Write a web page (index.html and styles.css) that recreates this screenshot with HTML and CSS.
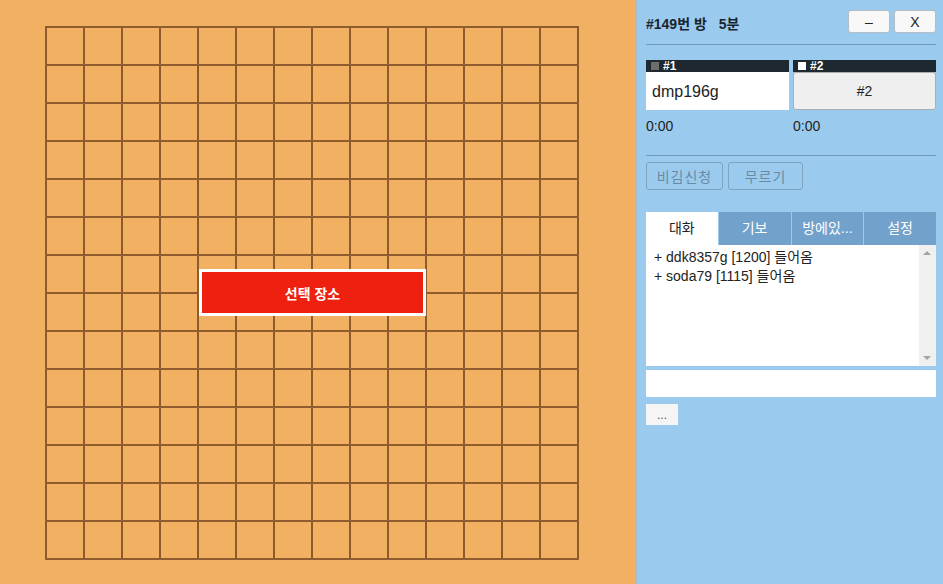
FILE: index.html
```html
<!DOCTYPE html>
<html lang="ko">
<head>
    <meta charset="UTF-8">
    <meta name="viewport" content="width=device-width, initial-scale=1.0">
    <title>#149번 방</title>
    <link rel="stylesheet" href="styles.css">
</head>
<body>
    <div class="game">
        <div class="board-area">
            <div class="board"></div>
            <button class="place-btn">선택 장소</button>
        </div>

        <div class="side">
            <div class="room-head">
                <div class="room-title">#149번 방 <span class="room-time">5분</span></div>
                <div class="win-btns">
                    <button class="win-btn">–</button>
                    <button class="win-btn">X</button>
                </div>
            </div>
            <hr class="line">

            <div class="players">
                <div class="player">
                    <div class="player-label"><span class="stone black"></span>#1</div>
                    <div class="player-name">dmp196g</div>
                    <div class="player-time">0:00</div>
                </div>
                <div class="player">
                    <div class="player-label"><span class="stone white"></span>#2</div>
                    <button class="player-seat">#2</button>
                    <div class="player-time">0:00</div>
                </div>
            </div>
            <hr class="line">

            <div class="actions">
                <button class="act-btn draw" disabled>비김신청</button>
                <button class="act-btn undo" disabled>무르기</button>
            </div>

            <div class="tabs">
                <div class="tab active">대화</div>
                <div class="tab">기보</div>
                <div class="tab">방에있...</div>
                <div class="tab">설정</div>
            </div>
            <div class="chat">
                <div class="chat-log">
                    <div>+ ddk8357g [1200] 들어옴</div>
                    <div>+ soda79 [1115] 들어옴</div>
                </div>
                <div class="scrollbar">
                    <span class="arrow up"></span>
                    <span class="arrow down"></span>
                </div>
            </div>
            <input type="text" class="chat-input">
            <button class="more-btn">...</button>
        </div>
    </div>
</body>
</html>
```

FILE: styles.css
```css
body {
    margin: 0;
    font-family: 'Liberation Sans', 'Noto Sans CJK KR', sans-serif;
    font-size: 14px;
    color: #222;
}
button {
    font-family: inherit;
}
.game {
    display: flex;
    width: 943px;
    height: 584px;
    overflow: hidden;
}
.board-area {
    position: relative;
    flex-shrink: 0;
    width: 636px;
    height: 584px;
    background: #f2b062;
}
.board {
    margin: 26px 0 0 45px;
    width: 534px;
    height: 534px;
    background-image:
        linear-gradient(to right, #8e5c2e 2px, transparent 2px),
        linear-gradient(to bottom, #8e5c2e 2px, transparent 2px);
    background-size: 38px 38px;
}
.place-btn {
    position: absolute;
    left: 199px;
    top: 269px;
    width: 227px;
    height: 47px;
    background: #ee2111;
    border: 3px solid #fff;
    color: #fff;
    font-size: 14px;
    font-weight: bold;
}
.side {
    box-sizing: border-box;
    flex-shrink: 0;
    width: 307px;
    height: 584px;
    padding: 0 7px 0 9px;
    background: #9acbee;
    border-left: 1px solid #a9bccc;
}
.room-head {
    display: flex;
    justify-content: space-between;
    align-items: center;
    height: 44px;
}
.room-title {
    font-weight: bold;
    font-size: 14px;
    color: #1a2430;
    padding-top: 1px;
}
.room-time {
    margin-left: 8px;
}
.win-btns {
    display: flex;
    gap: 4px;
    margin-top: -1px;
}
.win-btn {
    width: 42px;
    height: 23px;
    background: #f8f8f8;
    border: 1px solid #b4bcc4;
    border-radius: 3px;
    font-size: 14px;
    color: #222;
    padding: 0;
}
.line {
    margin: 0;
    border: none;
    border-top: 1px solid #6f9bc2;
}
.players {
    display: flex;
    gap: 4px;
    padding-top: 15px;
    height: 95px;
}
.player {
    flex: 1;
}
.player-label {
    display: flex;
    align-items: center;
    height: 12px;
    background: #1d2830;
    color: #fff;
    font-size: 12px;
    font-weight: bold;
    padding-left: 5px;
}
.stone {
    width: 8px;
    height: 8px;
    margin-right: 4px;
}
.stone.black {
    background: #6d6d6d;
}
.stone.white {
    background: #fff;
}
.player-name {
    height: 38px;
    background: #fff;
    font-size: 16px;
    line-height: 40px;
    padding-left: 6px;
    color: #222;
}
.player-seat {
    display: block;
    width: 100%;
    height: 38px;
    background: #efefef;
    border: 1px solid #a9aeb2;
    border-radius: 3px;
    font-size: 14px;
    color: #222;
}
.player-time {
    margin-top: 8px;
    font-size: 14px;
    color: #222;
}
.actions {
    display: flex;
    gap: 5px;
    padding-top: 6px;
    height: 50px;
}
.act-btn {
    height: 28px;
    padding: 0;
    background: transparent;
    border: 1px solid #7ea3bf;
    border-radius: 3px;
    font-size: 14px;
    letter-spacing: 1px;
    color: #6a8aa2;
}
.act-btn.draw {
    width: 77px;
}
.act-btn.undo {
    width: 75px;
}
.tabs {
    display: flex;
    gap: 1px;
    height: 33px;
}
.tab {
    flex: 1;
    background: #72a2cc;
    color: #fff;
    text-align: center;
    line-height: 33px;
    font-size: 14px;
}
.tab.active {
    background: #fff;
    color: #222;
}
.chat {
    display: flex;
    height: 121px;
    background: #fff;
}
.chat-log {
    flex: 1;
    padding: 3px 8px;
    font-size: 14px;
    line-height: 19px;
    color: #222;
}
.scrollbar {
    position: relative;
    width: 17px;
    background: #f0f0f0;
}
.arrow {
    position: absolute;
    left: 4px;
    border-left: 4px solid transparent;
    border-right: 4px solid transparent;
}
.arrow.up {
    top: 6px;
    border-bottom: 4px solid #a3a3a3;
}
.arrow.down {
    bottom: 6px;
    border-top: 4px solid #a3a3a3;
}
.chat-input {
    display: block;
    box-sizing: border-box;
    width: 100%;
    height: 27px;
    margin-top: 4px;
    border: none;
    outline: none;
    background: #fff;
}
.more-btn {
    display: block;
    margin-top: 7px;
    width: 32px;
    height: 21px;
    padding: 0;
    background: #f5f5f5;
    border: none;
    color: #555;
    font-size: 12px;
}
```
